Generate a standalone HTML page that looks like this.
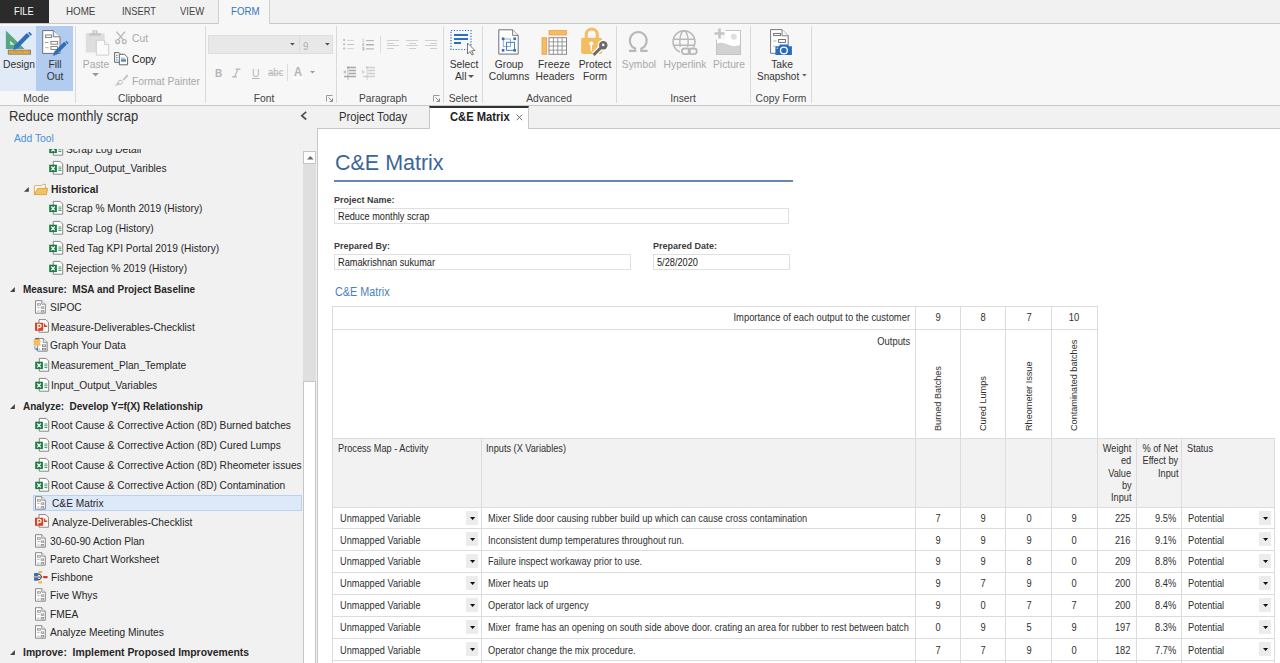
<!DOCTYPE html>
<html><head><meta charset="utf-8"><title>C&amp;E Matrix</title>
<style>
html,body{margin:0;padding:0;}
body{width:1280px;height:663px;overflow:hidden;position:relative;background:#f1f1f1;font-family:"Liberation Sans", sans-serif;}
.t{position:absolute;white-space:nowrap;}
.b{position:absolute;box-sizing:border-box;}
svg.b{overflow:visible;}
</style></head><body>

<div class="b" style="left:0px;top:0px;width:1280px;height:23px;background:#f1f1f1;"></div>
<div class="b" style="left:0px;top:0px;width:49px;height:23px;background:#2b2b2b;"></div>
<div class="t" style="left:14px;transform-origin:0 0;top:5px;font-size:10.220px;line-height:13px;color:#fff;transform:scaleX(0.91);">FILE</div>
<div class="t" style="left:66px;transform-origin:0 0;top:4px;font-size:10.769px;line-height:14px;color:#444;transform:scaleX(0.91);">HOME</div>
<div class="t" style="left:122px;transform-origin:0 0;top:5px;font-size:10.220px;line-height:13px;color:#444;transform:scaleX(0.91);">INSERT</div>
<div class="t" style="left:180px;transform-origin:0 0;top:5px;font-size:10.440px;line-height:14px;color:#444;transform:scaleX(0.91);">VIEW</div>
<div class="b" style="left:0px;top:23px;width:1280px;height:83px;background:#f7f7f7;border-top:1px solid #c8c8c8;border-bottom:1px solid #c8c8c8;"></div>
<div class="b" style="left:218px;top:0px;width:52px;height:24px;background:#f7f7f7;border-left:1px solid #cfcfcf;border-right:1px solid #cfcfcf;"></div>
<div class="t" style="left:230.6px;transform-origin:0 0;top:4px;font-size:10.659px;line-height:14px;color:#3a74bd;transform:scaleX(0.91);">FORM</div>
<div class="b" style="left:0px;top:26px;width:36px;height:65px;background:#e1eaf7;"></div>
<div class="b" style="left:36px;top:26px;width:37px;height:65px;background:#b2ccef;"></div>
<div class="b" style="left:75px;top:26px;width:1px;height:77px;background:#dadada;"></div>
<div class="b" style="left:205px;top:26px;width:1px;height:77px;background:#dadada;"></div>
<div class="b" style="left:336px;top:26px;width:1px;height:77px;background:#dadada;"></div>
<div class="b" style="left:443px;top:26px;width:1px;height:77px;background:#dadada;"></div>
<div class="b" style="left:482px;top:26px;width:1px;height:77px;background:#dadada;"></div>
<div class="b" style="left:616px;top:26px;width:1px;height:77px;background:#dadada;"></div>
<div class="b" style="left:750px;top:26px;width:1px;height:77px;background:#dadada;"></div>
<div class="b" style="left:811px;top:26px;width:1px;height:77px;background:#dadada;"></div>
<svg class="b" style="left:0px;top:24px" width="75" height="36" viewBox="0 24 75 36">
<path d="M5.9 30.4 L5.9 48.9 L24.6 48.9 Z" fill="#55a77f"/>
<path d="M10.2 40.7 L10.2 44.8 L14.4 44.8 Z" fill="#e1eaf7"/>
<rect x="8.2" y="50.1" width="22.5" height="4.1" fill="#e8ab3e" stroke="#6a6a6a" stroke-width="0.7"/>
<path d="M9.5 52h1.5 M13 52h1 M15 52h2.5 M19.5 52h1 M21.5 52h2.5 M26 52h1 M28 52h2" stroke="#c98a20" stroke-width="1.2"/>
<path d="M15.5 47.5 L28.4 34.6" stroke="#2f6fba" stroke-width="4.3"/>
<path d="M28.1 33.1 L29.4 31.8 L32 34.4 L30.7 35.7 Z" fill="#2f6fba"/>
<path d="M13.3 50 L14.3 46.2 L16.9 48.8 Z" fill="#2f6fba"/>
</svg>
<svg class="b" style="left:0px;top:24px" width="75" height="36" viewBox="0 24 75 36">
<path d="M42.7 30.6 H53.3 L60 37.3 V53.4 H42.7 Z" fill="#fff" stroke="#6e6e6e" stroke-width="1"/>
<path d="M53.3 30.6 V36.8 H60" fill="#f0f0f0" stroke="#6e6e6e" stroke-width="0.9"/>
<rect x="45.6" y="35" width="6" height="2.6" fill="none" stroke="#777" stroke-width="0.9"/>
<path d="M45.1 42.5h3.4" stroke="#8a8a8a" stroke-width="0.9"/>
<rect x="50.9" y="41.4" width="6.8" height="2.8" fill="none" stroke="#777" stroke-width="0.9"/>
<path d="M45.1 47.7h3.4" stroke="#aaa" stroke-width="0.9"/>
<rect x="50.9" y="46.6" width="6.8" height="2.8" fill="none" stroke="#777" stroke-width="0.9"/>
<path d="M55 53.6 L65.5 43.2" stroke="#2f6fba" stroke-width="3.8"/>
<path d="M65.3 41.9 L66.4 40.8 L68.6 43 L67.5 44.1 Z" fill="#2f6fba"/>
<path d="M53 55.8 L53.9 52.6 L56.2 54.9 Z" fill="#2f6fba"/>
</svg>
<div class="t" style="left:3px;transform-origin:0 0;top:57px;font-size:11.319px;line-height:15px;color:#333;transform:scaleX(0.91);">Design</div>
<div class="t" style="left:-245.5px;width:600px;text-align:center;transform-origin:50% 0;top:57px;font-size:11.319px;line-height:15px;color:#333;transform:scaleX(0.91);">Fill</div>
<div class="t" style="left:-245.5px;width:600px;text-align:center;transform-origin:50% 0;top:69px;font-size:11.319px;line-height:15px;color:#333;transform:scaleX(0.91);">Out</div>
<div class="t" style="left:-264px;width:600px;text-align:center;transform-origin:50% 0;top:91px;font-size:11.319px;line-height:15px;color:#444;transform:scaleX(0.91);">Mode</div>
<svg class="b" style="left:0px;top:24px" width="220" height="70" viewBox="0 24 220 70">
<rect x="85.8" y="33.2" width="18.8" height="19.3" fill="#dedede"/>
<rect x="89.2" y="33.2" width="11.6" height="2.6" fill="#c6c6c6"/>
<rect x="92.5" y="30.3" width="5" height="3.5" fill="#c6c6c6"/>
<rect x="94" y="31.3" width="2" height="1.6" fill="#e8e8e8"/>
<path d="M96.3 40.3 H104.5 L108.7 44.5 V55.1 H96.3 Z" fill="#fafafa" stroke="#cbcbcb" stroke-width="0.9"/>
<path d="M104.5 40.3 V44.5 H108.7" fill="#eee" stroke="#cbcbcb" stroke-width="0.8"/>
</svg>
<div class="t" style="left:-204.5px;width:600px;text-align:center;transform-origin:50% 0;top:57px;font-size:11.319px;line-height:15px;color:#a8a8a8;transform:scaleX(0.91);">Paste</div>
<svg class="b" style="left:92px;top:73px" width="7" height="4" viewBox="0 0 7 4"><path d="M0 0 H7 L3.5 3.5 Z" fill="#9a9a9a"/></svg>
<svg class="b" style="left:0px;top:24px" width="220" height="70" viewBox="0 24 220 70">
<path d="M116.4 31.6 L123.2 39.6 M125 31.6 L118.2 39.6" stroke="#b8b8b8" stroke-width="1.4"/>
<circle cx="117.7" cy="41.6" r="1.9" fill="none" stroke="#b8b8b8" stroke-width="1.3"/>
<circle cx="124.3" cy="41.6" r="1.9" fill="none" stroke="#b8b8b8" stroke-width="1.3"/>
</svg>
<div class="t" style="left:131.5px;transform-origin:0 0;top:31px;font-size:11.319px;line-height:15px;color:#a8a8a8;transform:scaleX(0.91);">Cut</div>
<svg class="b" style="left:0px;top:24px" width="220" height="70" viewBox="0 24 220 70">
<path d="M114.6 52.6 H119 L120.3 54 V62.3 H114.6 Z" fill="#fff" stroke="#555" stroke-width="0.9"/>
<path d="M116 55.3h1.6 M116 57.6h1.6 M116 60h1.6" stroke="#2f6fba" stroke-width="0.9"/>
<path d="M119.3 54.3 H124.5 L127.6 57.4 V64.8 H119.3 Z" fill="#fff" stroke="#555" stroke-width="0.9"/>
<rect x="121" y="59.3" width="5" height="2.4" fill="#4a86c8"/>
<path d="M121 58.2h4" stroke="#4a86c8" stroke-width="0.7"/>
</svg>
<div class="t" style="left:131.5px;transform-origin:0 0;top:52px;font-size:11.319px;line-height:15px;color:#222;transform:scaleX(0.91);">Copy</div>
<svg class="b" style="left:0px;top:24px" width="220" height="70" viewBox="0 24 220 70">
<path d="M127.4 74.3 Q128.6 75.8 127.6 77 L124.2 80.6 L122.6 79.2 L126 75.6 Q126.6 74.8 127.4 74.3 Z" fill="#c6c6c6"/>
<circle cx="120.5" cy="82.3" r="1.9" fill="#f7f7f7" stroke="#c4c4c4" stroke-width="1.1"/>
<path d="M119 81 Q116.3 83 114.6 85.9 Q117.8 85.7 121.8 83.8 Z" fill="#c8c8c8"/>
<circle cx="120.5" cy="82.3" r="1.3" fill="#f7f7f7"/>
</svg>
<div class="t" style="left:131.5px;transform-origin:0 0;top:74px;font-size:11.319px;line-height:15px;color:#a8a8a8;transform:scaleX(0.91);">Format Painter</div>
<div class="t" style="left:-160px;width:600px;text-align:center;transform-origin:50% 0;top:91px;font-size:11.319px;line-height:15px;color:#444;transform:scaleX(0.91);">Clipboard</div>
<div class="b" style="left:208px;top:35px;width:125px;height:19px;background:#e8e8e8;border:1px solid #dedede;"></div>
<div class="b" style="left:298.5px;top:36px;width:1.5px;height:17px;background:#dcdcdc;"></div>
<svg class="b" style="left:290px;top:43px" width="5" height="3" viewBox="0 0 5 3"><path d="M0 0 H4.8 L2.4 2.6 Z" fill="#505050"/></svg>
<svg class="b" style="left:324.5px;top:43px" width="5" height="3" viewBox="0 0 5 3"><path d="M0 0 H4.8 L2.4 2.6 Z" fill="#505050"/></svg>
<div class="t" style="left:303px;transform-origin:0 0;top:39px;font-size:10.989px;line-height:14px;color:#b0b0b0;transform:scaleX(0.91);">9</div>
<div class="t" style="left:214.5px;transform-origin:0 0;top:65px;font-size:11.765px;line-height:15px;color:#b5b5b5;transform:scaleX(0.85);"><b>B</b></div>
<svg class="b" style="left:0px;top:24px" width="320" height="70" viewBox="0 24 320 70"><path d="M235.5 69.2 H240.5 M232 76.8 H237 M238 69.2 L234.5 76.8" stroke="#b8b8b8" stroke-width="1.2" fill="none"/></svg>
<div class="t" style="left:252px;transform-origin:0 0;top:66px;font-size:11.538px;line-height:15px;color:#b8b8b8;transform:scaleX(0.91);"><u>U</u></div>
<div class="t" style="left:268px;transform-origin:0 0;top:65px;font-size:11.294px;line-height:15px;color:#b5b5b5;transform:scaleX(0.85);">abc</div>
<div class="b" style="left:268px;top:73px;width:14px;height:1px;background:#c4c4c4;"></div>
<div class="b" style="left:287px;top:64px;width:1px;height:17px;background:#dcdcdc;"></div>
<div class="t" style="left:294px;transform-origin:0 0;top:64px;font-size:12.222px;line-height:16px;color:#b5b5b5;transform:scaleX(0.9);"><b>A</b></div>
<div class="b" style="left:293px;top:77px;width:10px;height:2px;background:#fff;"></div>
<svg class="b" style="left:310px;top:71px" width="5" height="3" viewBox="0 0 5 3"><path d="M0 0 H5 L2.5 2.5 Z" fill="#9a9a9a"/></svg>
<div class="t" style="left:-36.5px;width:600px;text-align:center;transform-origin:50% 0;top:91px;font-size:11.319px;line-height:15px;color:#444;transform:scaleX(0.91);">Font</div>
<svg class="b" style="left:326px;top:95px" width="7" height="7" viewBox="0 0 7 7"><path d="M0.5 6.5 V0.5 H6.5" fill="none" stroke="#999" stroke-width="1"/><path d="M2.5 2.5 L6 6 M3.5 6.5 H6.5 V3.5" fill="none" stroke="#888" stroke-width="1"/></svg>
<svg class="b" style="left:0px;top:24px" width="800" height="40" viewBox="0 24 800 40">
<circle cx="344.1" cy="40.1" r="1.1" fill="#bdbdbd"/>
<circle cx="344.1" cy="44.3" r="1.1" fill="#bdbdbd"/>
<circle cx="344.1" cy="48.5" r="1.1" fill="#bdbdbd"/>
<path d="M347.2 40.4 H353.9" stroke="#d2d2d2" stroke-width="1"/>
<path d="M347.2 44.5 H353.9" stroke="#c2c2c2" stroke-width="1"/>
<path d="M347.2 48.6 H353.9" stroke="#d2d2d2" stroke-width="1"/>
<path d="M362.3 39.3 H363.5 V41.6 M362.2 41.6 H364.3" fill="none" stroke="#c8c8c8" stroke-width="0.8"/>
<path d="M362.2 43.3 H364 V44.6 H362.4 V45.9 H364.3" fill="none" stroke="#bdbdbd" stroke-width="0.8"/>
<path d="M362.2 47.6 H364 V50 H362.2 M362.6 48.8 H364" fill="none" stroke="#b0b0b0" stroke-width="0.8"/>
<path d="M366 40.6 H373.9" stroke="#b5b5b5" stroke-width="1.1"/>
<path d="M366 44.8 H373.9" stroke="#999" stroke-width="1.1"/>
<path d="M366 48.9 H373.9" stroke="#b0b0b0" stroke-width="1.1"/>
</svg>
<div class="b" style="left:380px;top:36px;width:1px;height:17px;background:#dcdcdc;"></div>
<div class="b" style="left:387px;top:40px;width:12px;height:1.3px;background:#cfcfcf;"></div>
<div class="b" style="left:387px;top:42.5px;width:7px;height:1.3px;background:#cfcfcf;"></div>
<div class="b" style="left:387px;top:45px;width:12px;height:1.3px;background:#cfcfcf;"></div>
<div class="b" style="left:387px;top:47.5px;width:7px;height:1.3px;background:#cfcfcf;"></div>
<div class="b" style="left:406.0px;top:40px;width:12px;height:1.3px;background:#cfcfcf;"></div>
<div class="b" style="left:408.5px;top:42.5px;width:7px;height:1.3px;background:#cfcfcf;"></div>
<div class="b" style="left:406.0px;top:45px;width:12px;height:1.3px;background:#cfcfcf;"></div>
<div class="b" style="left:408.5px;top:47.5px;width:7px;height:1.3px;background:#cfcfcf;"></div>
<div class="b" style="left:425px;top:40px;width:12px;height:1.3px;background:#cfcfcf;"></div>
<div class="b" style="left:430px;top:42.5px;width:7px;height:1.3px;background:#cfcfcf;"></div>
<div class="b" style="left:425px;top:45px;width:12px;height:1.3px;background:#cfcfcf;"></div>
<div class="b" style="left:430px;top:47.5px;width:7px;height:1.3px;background:#cfcfcf;"></div>
<svg class="b" style="left:343px;top:66px" width="14" height="14" viewBox="0 0 14 14">
<path d="M4 1.5h9 M6 4.5h7 M6 7.5h7 M1 10.5h12" stroke="#a8a8a8" stroke-width="1.5"/>
<path d="M0 6 L3 4 V8 Z" fill="#c0c0c0"/>
<path d="M5 0 V14" stroke="#999" stroke-width="0.6"/>
</svg>
<svg class="b" style="left:362px;top:66px" width="14" height="14" viewBox="0 0 14 14">
<path d="M4 1.5h9 M6 4.5h7 M6 7.5h7 M1 10.5h12" stroke="#d0d0d0" stroke-width="1.5"/>
<path d="M3 6 L0 4 V8 Z" fill="#d0d0d0"/>
<path d="M5 0 V14" stroke="#bbb" stroke-width="0.6"/>
</svg>
<div class="t" style="left:82.5px;width:600px;text-align:center;transform-origin:50% 0;top:91px;font-size:11.319px;line-height:15px;color:#444;transform:scaleX(0.91);">Paragraph</div>
<svg class="b" style="left:433px;top:95px" width="7" height="7" viewBox="0 0 7 7"><path d="M0.5 6.5 V0.5 H6.5" fill="none" stroke="#999" stroke-width="1"/><path d="M2.5 2.5 L6 6 M3.5 6.5 H6.5 V3.5" fill="none" stroke="#888" stroke-width="1"/></svg>
<svg class="b" style="left:450px;top:29px" width="27" height="27" viewBox="0 0 27 27">
<rect x="1" y="1.5" width="20" height="19" fill="none" stroke="#2c6fbf" stroke-width="1.2" stroke-dasharray="1.2 1.6"/>
<rect x="4" y="5" width="14" height="2" fill="#2c6fbf"/>
<rect x="4" y="9" width="14" height="2" fill="#2c6fbf"/>
<rect x="4" y="13" width="7" height="2" fill="#2c6fbf"/>
<path d="M17.5 14 V25 L20 22.5 L22 26 L23.5 25.2 L21.5 21.8 L25 21.5 Z" fill="#fff" stroke="#666" stroke-width="0.9"/>
</svg>
<div class="t" style="left:163.5px;width:600px;text-align:center;transform-origin:50% 0;top:57px;font-size:11.319px;line-height:15px;color:#333;transform:scaleX(0.91);">Select</div>
<div class="t" style="left:454.5px;transform-origin:0 0;top:69px;font-size:11.319px;line-height:15px;color:#333;transform:scaleX(0.91);">All</div>
<svg class="b" style="left:468px;top:75px" width="6" height="3" viewBox="0 0 6 3"><path d="M0 0 H6 L3 3 Z" fill="#555"/></svg>
<div class="t" style="left:163px;width:600px;text-align:center;transform-origin:50% 0;top:91px;font-size:11.319px;line-height:15px;color:#444;transform:scaleX(0.91);">Select</div>
<svg class="b" style="left:0px;top:24px" width="800" height="40" viewBox="0 24 800 40">
<path d="M498.8 29.8 H512.6 L518.2 35.4 V54.1 H498.8 Z" fill="#fff" stroke="#707070" stroke-width="1"/>
<path d="M512.6 29.8 V35.4 H518.2" fill="#f4f4f4" stroke="#707070" stroke-width="0.9"/>
<rect x="503.3" y="39" width="7.2" height="7.6" fill="none" stroke="#7ea6d8" stroke-width="0.9"/>
<rect x="506.6" y="42.3" width="8" height="8" fill="none" stroke="#2f6fba" stroke-width="0.9"/>
<rect x="501.8" y="37.5" width="2.6" height="2.6" fill="#2f6fba"/>
<rect x="513.4" y="37.5" width="2.6" height="2.6" fill="#2f6fba"/>
<rect x="501.8" y="49" width="2.6" height="2.6" fill="#2f6fba"/>
<rect x="513.4" y="49" width="2.6" height="2.6" fill="#2f6fba"/>
</svg>
<div class="t" style="left:208.5px;width:600px;text-align:center;transform-origin:50% 0;top:57px;font-size:11.319px;line-height:15px;color:#333;transform:scaleX(0.91);">Group</div>
<div class="t" style="left:209px;width:600px;text-align:center;transform-origin:50% 0;top:69px;font-size:11.319px;line-height:15px;color:#333;transform:scaleX(0.91);">Columns</div>
<svg class="b" style="left:541px;top:29px" width="27" height="27" viewBox="0 0 27 27">
<rect x="8" y="1.5" width="17.5" height="4.5" fill="#f5bd62" stroke="#ee9f4a" stroke-width="0.8"/>
<rect x="1" y="8.7" width="4.6" height="16.6" fill="#f5bd62" stroke="#ee9f4a" stroke-width="0.8"/>
<rect x="8" y="8.7" width="17.5" height="16.6" fill="#fff" stroke="#8a8a8a" stroke-width="1"/>
<path d="M12.4 8.7v16.6 M16.75 8.7v16.6 M21.1 8.7v16.6 M8 12.85h17.5 M8 17h17.5 M8 21.15h17.5" stroke="#8f8f8f" stroke-width="0.9"/>
</svg>
<div class="t" style="left:254px;width:600px;text-align:center;transform-origin:50% 0;top:57px;font-size:11.319px;line-height:15px;color:#333;transform:scaleX(0.91);">Freeze</div>
<div class="t" style="left:254.5px;width:600px;text-align:center;transform-origin:50% 0;top:69px;font-size:11.319px;line-height:15px;color:#333;transform:scaleX(0.91);">Headers</div>
<svg class="b" style="left:0px;top:24px" width="800" height="40" viewBox="0 24 800 40">
<path d="M586.3 38.5 V34.5 A5.5 5.5 0 0 1 597.3 34.5 V38.5" fill="none" stroke="#f5bd62" stroke-width="3"/>
<rect x="581.1" y="37.8" width="21.1" height="16.2" rx="2" fill="#f5bd62"/>
<circle cx="591.3" cy="43.6" r="2.1" fill="#fff"/>
<rect x="590.6" y="44" width="1.4" height="7.2" fill="#fff"/>
<path d="M594 54.6 L600.8 47.8" stroke="#f7f7f7" stroke-width="5.6"/>
<circle cx="603.3" cy="45.2" r="5.6" fill="#f7f7f7"/>
<path d="M593.6 55 L600.8 47.8" stroke="#6a6a6a" stroke-width="3"/>
<circle cx="603.3" cy="45.2" r="4.2" fill="#6a6a6a"/>
<circle cx="603.2" cy="44.9" r="1.3" fill="#f7f7f7"/>
</svg>
<div class="t" style="left:294.5px;width:600px;text-align:center;transform-origin:50% 0;top:57px;font-size:11.319px;line-height:15px;color:#333;transform:scaleX(0.91);">Protect</div>
<div class="t" style="left:294.5px;width:600px;text-align:center;transform-origin:50% 0;top:69px;font-size:11.319px;line-height:15px;color:#333;transform:scaleX(0.91);">Form</div>
<div class="t" style="left:248.5px;width:600px;text-align:center;transform-origin:50% 0;top:91px;font-size:11.319px;line-height:15px;color:#444;transform:scaleX(0.91);">Advanced</div>
<svg class="b" style="left:0px;top:24px" width="800" height="40" viewBox="0 24 800 40">
<path d="M629 50.9 H635.2 V48.6 A8.4 8.6 0 1 1 641.3 48.6 V50.9 H647.6" fill="none" stroke="#b8b8b8" stroke-width="2.1" stroke-linejoin="miter"/>
<circle cx="684" cy="41.7" r="11" fill="none" stroke="#b8b8b8" stroke-width="1.5"/>
<ellipse cx="684" cy="41.7" rx="4.2" ry="11" fill="none" stroke="#b8b8b8" stroke-width="1.4"/>
<path d="M673 39.2 H695 M673 45.3 H695" stroke="#b8b8b8" stroke-width="1.4"/>
<rect x="680" y="47" width="19" height="9.5" fill="#f7f7f7"/>
<rect x="681.8" y="48.5" width="8.2" height="5.6" rx="2.8" fill="none" stroke="#b8b8b8" stroke-width="1.8"/>
<rect x="688.6" y="48.5" width="8.2" height="5.6" rx="2.8" fill="none" stroke="#b8b8b8" stroke-width="1.8"/>
<rect x="716.5" y="30.5" width="24" height="24" fill="#fff" stroke="#c4c4c4" stroke-width="1"/>
<path d="M717 54 V43.5 Q722 41.5 728 44.5 T740 45 V54 Z" fill="#d2d2d2"/>
<circle cx="733.8" cy="36.7" r="3" fill="#dedede"/>
<rect x="713.5" y="28" width="12" height="11.5" fill="#f7f7f7"/>
<path d="M719.5 28.5 V38.5 M714.5 33.5 H724.5" stroke="#c4c4c4" stroke-width="2.6"/>
</svg>
<div class="t" style="left:339px;width:600px;text-align:center;transform-origin:50% 0;top:57px;font-size:11.319px;line-height:15px;color:#a8a8a8;transform:scaleX(0.91);">Symbol</div>
<div class="t" style="left:384.5px;width:600px;text-align:center;transform-origin:50% 0;top:57px;font-size:11.319px;line-height:15px;color:#a8a8a8;transform:scaleX(0.91);">Hyperlink</div>
<div class="t" style="left:429px;width:600px;text-align:center;transform-origin:50% 0;top:57px;font-size:11.319px;line-height:15px;color:#a8a8a8;transform:scaleX(0.91);">Picture</div>
<div class="t" style="left:383px;width:600px;text-align:center;transform-origin:50% 0;top:91px;font-size:11.319px;line-height:15px;color:#444;transform:scaleX(0.91);">Insert</div>
<svg class="b" style="left:0px;top:24px" width="800" height="40" viewBox="0 24 800 40">
<path d="M770.6 29.6 H782 L788.2 35.8 V53.3 H770.6 Z" fill="#fff" stroke="#777" stroke-width="1"/>
<path d="M782 29.6 V35.8 H788.2" fill="#f4f4f4" stroke="#777" stroke-width="0.9"/>
<rect x="773.7" y="33.4" width="6.8" height="2.2" fill="none" stroke="#666" stroke-width="0.9"/>
<path d="M773.3 41h3.3" stroke="#aaa" stroke-width="0.9"/>
<rect x="778.6" y="39.5" width="6.8" height="2.9" fill="none" stroke="#666" stroke-width="0.9"/>
<path d="M773.3 46.3h2" stroke="#aaa" stroke-width="0.9"/>
<path d="M775.4 46.3 H779 L779.8 44.6 H787.7 L788.5 46.3 H791.9 V55 H775.4 Z" fill="#2a6bbd"/>
<circle cx="783.9" cy="50.5" r="3.4" fill="none" stroke="#fff" stroke-width="1.3"/>
<circle cx="777.2" cy="48.2" r="0.6" fill="#fff"/>
</svg>
<div class="t" style="left:481.5px;width:600px;text-align:center;transform-origin:50% 0;top:57px;font-size:11.319px;line-height:15px;color:#333;transform:scaleX(0.91);">Take</div>
<div class="t" style="left:756.5px;transform-origin:0 0;top:69px;font-size:10.989px;line-height:14px;color:#333;transform:scaleX(0.91);">Snapshot</div>
<svg class="b" style="left:801.5px;top:74.2px" width="5" height="3" viewBox="0 0 5 3"><path d="M0 0 H4.8 L2.4 2.6 Z" fill="#666"/></svg>
<div class="t" style="left:480.5px;width:600px;text-align:center;transform-origin:50% 0;top:91px;font-size:11.319px;line-height:15px;color:#444;transform:scaleX(0.91);">Copy Form</div>
<div class="t" style="left:9px;transform-origin:0 0;top:107px;font-size:14.286px;line-height:19px;color:#333;transform:scaleX(0.91);">Reduce monthly scrap</div>
<svg class="b" style="left:300px;top:111px" width="8" height="10" viewBox="0 0 8 10"><path d="M6.2 0.9 L1.8 4.7 L6.2 8.5" fill="none" stroke="#505050" stroke-width="1.7"/></svg>
<div class="t" style="left:13.5px;transform-origin:0 0;top:131px;font-size:11.319px;line-height:15px;color:#4a8fdd;transform:scaleX(0.91);">Add Tool</div>
<div class="b" style="left:0;top:149px;width:302px;height:514px;overflow:hidden;">
<div class="b" style="left:0;top:-149px;width:1280px;height:663px;">
<div class="b" style="left:33px;top:495px;width:269px;height:16px;background:#dde9f9;border:1px solid #b9d1f3;"></div>
<svg class="b" style="left:0px;top:0px" width="320" height="663" viewBox="0 0 320 663">
<path d="M53.3 142.4 H60.1 L62.7 145 V155.2 H53.3 Z" fill="#fff" stroke="#7a7a7a" stroke-width="0.9"/>
<path d="M58.4 148h3 M58.4 149.8h3 M58.4 151.6h3" stroke="#2a8a53" stroke-width="0.9"/>
<rect x="49.2" y="145.7" width="7.7" height="7.4" fill="#1f7a45"/>
<path d="M51.3 147.5 L54.8 151.4 M54.8 147.5 L51.3 151.4" stroke="#fff" stroke-width="1.2"/>
</svg>
<div class="t" style="left:66.1px;transform-origin:0 0;top:142px;font-size:11.209px;line-height:15px;color:#262626;transform:scaleX(0.91);">Scrap Log Detail</div>
<svg class="b" style="left:0px;top:0px" width="320" height="663" viewBox="0 0 320 663">
<path d="M53.3 161.4 H60.1 L62.7 164 V174.2 H53.3 Z" fill="#fff" stroke="#7a7a7a" stroke-width="0.9"/>
<path d="M58.4 167h3 M58.4 168.8h3 M58.4 170.6h3" stroke="#2a8a53" stroke-width="0.9"/>
<rect x="49.2" y="164.7" width="7.7" height="7.4" fill="#1f7a45"/>
<path d="M51.3 166.5 L54.8 170.4 M54.8 166.5 L51.3 170.4" stroke="#fff" stroke-width="1.2"/>
</svg>
<div class="t" style="left:66.1px;transform-origin:0 0;top:161px;font-size:11.209px;line-height:15px;color:#262626;transform:scaleX(0.91);">Input_Output_Varibles</div>
<svg class="b" style="left:0px;top:0px" width="320" height="663" viewBox="0 0 320 663"><path d="M28.8 186.9 V191.8 H23.9 Z" fill="#444"/><path d="M34.4 194.4 V186.2 Q34.4 185.6 35.2 185.6 H41.6 L43 184.4 H45.4 V188.6" fill="#fff" stroke="#d8a548" stroke-width="0.9"/><path d="M37.6 188.4 H47.6 L46.4 194.6 H34.2 Z" fill="#f5c162" stroke="#d9a03e" stroke-width="0.9" stroke-linejoin="round"/></svg>
<div class="t" style="left:50.8px;transform-origin:0 0;top:182px;font-size:11.429px;line-height:15px;color:#262626;font-weight:bold;transform:scaleX(0.91);">Historical</div>
<svg class="b" style="left:0px;top:0px" width="320" height="663" viewBox="0 0 320 663">
<path d="M53.3 201.4 H60.1 L62.7 204 V214.2 H53.3 Z" fill="#fff" stroke="#7a7a7a" stroke-width="0.9"/>
<path d="M58.4 207h3 M58.4 208.8h3 M58.4 210.6h3" stroke="#2a8a53" stroke-width="0.9"/>
<rect x="49.2" y="204.7" width="7.7" height="7.4" fill="#1f7a45"/>
<path d="M51.3 206.5 L54.8 210.4 M54.8 206.5 L51.3 210.4" stroke="#fff" stroke-width="1.2"/>
</svg>
<div class="t" style="left:66.1px;transform-origin:0 0;top:201px;font-size:11.209px;line-height:15px;color:#262626;transform:scaleX(0.91);">Scrap % Month 2019 (History)</div>
<svg class="b" style="left:0px;top:0px" width="320" height="663" viewBox="0 0 320 663">
<path d="M53.3 221.4 H60.1 L62.7 224 V234.2 H53.3 Z" fill="#fff" stroke="#7a7a7a" stroke-width="0.9"/>
<path d="M58.4 227h3 M58.4 228.8h3 M58.4 230.6h3" stroke="#2a8a53" stroke-width="0.9"/>
<rect x="49.2" y="224.7" width="7.7" height="7.4" fill="#1f7a45"/>
<path d="M51.3 226.5 L54.8 230.4 M54.8 226.5 L51.3 230.4" stroke="#fff" stroke-width="1.2"/>
</svg>
<div class="t" style="left:66.1px;transform-origin:0 0;top:221px;font-size:11.209px;line-height:15px;color:#262626;transform:scaleX(0.91);">Scrap Log (History)</div>
<svg class="b" style="left:0px;top:0px" width="320" height="663" viewBox="0 0 320 663">
<path d="M53.3 241.4 H60.1 L62.7 244 V254.2 H53.3 Z" fill="#fff" stroke="#7a7a7a" stroke-width="0.9"/>
<path d="M58.4 247h3 M58.4 248.8h3 M58.4 250.6h3" stroke="#2a8a53" stroke-width="0.9"/>
<rect x="49.2" y="244.7" width="7.7" height="7.4" fill="#1f7a45"/>
<path d="M51.3 246.5 L54.8 250.4 M54.8 246.5 L51.3 250.4" stroke="#fff" stroke-width="1.2"/>
</svg>
<div class="t" style="left:66.1px;transform-origin:0 0;top:241px;font-size:11.209px;line-height:15px;color:#262626;transform:scaleX(0.91);">Red Tag KPI Portal 2019 (History)</div>
<svg class="b" style="left:0px;top:0px" width="320" height="663" viewBox="0 0 320 663">
<path d="M53.3 261.4 H60.1 L62.7 264 V274.2 H53.3 Z" fill="#fff" stroke="#7a7a7a" stroke-width="0.9"/>
<path d="M58.4 267h3 M58.4 268.8h3 M58.4 270.6h3" stroke="#2a8a53" stroke-width="0.9"/>
<rect x="49.2" y="264.7" width="7.7" height="7.4" fill="#1f7a45"/>
<path d="M51.3 266.5 L54.8 270.4 M54.8 266.5 L51.3 270.4" stroke="#fff" stroke-width="1.2"/>
</svg>
<div class="t" style="left:66.1px;transform-origin:0 0;top:261px;font-size:11.209px;line-height:15px;color:#262626;transform:scaleX(0.91);">Rejection % 2019 (History)</div>
<svg class="b" style="left:0px;top:0px" width="320" height="663" viewBox="0 0 320 663"><path d="M14.9 287.1 V291.9 H10.1 Z" fill="#444"/></svg>
<div class="t" style="left:23.3px;transform-origin:0 0;top:282px;font-size:10.989px;line-height:14px;color:#262626;font-weight:bold;transform:scaleX(0.91);">Measure:&nbsp; MSA and Project Baseline</div>
<svg class="b" style="left:0px;top:0px" width="320" height="663" viewBox="0 0 320 663">
<path d="M35.5 300.7 H41.8 L45.3 304.2 V313.2 H35.5 Z" fill="#fff" stroke="#7a7a7a" stroke-width="0.9"/>
<path d="M41.8 300.7 V304.2 H45.3" fill="#f2f2f2" stroke="#7a7a7a" stroke-width="0.8"/>
<rect x="37.5" y="303.7" width="3" height="1.5" fill="none" stroke="#8a8a8a" stroke-width="0.8"/>
<path d="M37.3 307.4h2.2 M37.3 311.1h2.2" stroke="#999" stroke-width="0.8"/>
<rect x="41.2" y="306.9" width="2.5" height="1.4" fill="none" stroke="#8a8a8a" stroke-width="0.8"/>
<rect x="41.2" y="310.6" width="2.5" height="1.4" fill="none" stroke="#8a8a8a" stroke-width="0.8"/>
</svg>
<div class="t" style="left:49.8px;transform-origin:0 0;top:300px;font-size:11.209px;line-height:15px;color:#262626;transform:scaleX(0.91);">SIPOC</div>
<svg class="b" style="left:0px;top:0px" width="320" height="663" viewBox="0 0 320 663">
<path d="M39 319.6 H45.8 L48.4 322.2 V332.2 H39 Z" fill="#fff" stroke="#7a7a7a" stroke-width="0.9"/>
<path d="M44.6 323.4 V326.2 H47.2" fill="none" stroke="#d24726" stroke-width="1.4"/>
<rect x="35" y="322.7" width="8.2" height="8.1" fill="#d24726"/>
<path d="M37.8 329.4 V324.4 H39.6 A1.5 1.5 0 0 1 39.6 327.4 H37.8" fill="none" stroke="#fff" stroke-width="1.2"/>
</svg>
<div class="t" style="left:51.3px;transform-origin:0 0;top:320px;font-size:11.209px;line-height:15px;color:#262626;transform:scaleX(0.91);">Measure-Deliverables-Checklist</div>
<svg class="b" style="left:0px;top:0px" width="320" height="663" viewBox="0 0 320 663">
<path d="M37.7 338.5 H43.3 L47.2 342.4 V351.2 H37.7 Z" fill="#fff" stroke="#7a7a7a" stroke-width="0.9"/>
<path d="M43.3 338.5 V342.4 H47.2" fill="#f2f2f2" stroke="#7a7a7a" stroke-width="0.8"/>
<rect x="42.4" y="344.9" width="3.4" height="1.6" fill="none" stroke="#7a7a7a" stroke-width="0.8"/>
<rect x="42.4" y="348.3" width="3.4" height="1.6" fill="none" stroke="#7a7a7a" stroke-width="0.8"/>
<path d="M39 349.2h1.3 M40.5 341.4h0.8 M40.5 344.8h0.8" stroke="#888" stroke-width="0.8"/>
<rect x="33.6" y="338.9" width="6.5" height="6.8" fill="#f5bd5e"/>
<rect x="35.1" y="337.9" width="3.9" height="1.4" fill="#6a6a6a"/>
<path d="M34.8 346.3 V348.2 Q34.8 349.2 36 349.2 H37" fill="none" stroke="#7aa6dc" stroke-width="1.2"/>
<path d="M36.4 347.8 L38.2 349.4 L36.4 350.6 Z" fill="#2f6fba"/>
</svg>
<div class="t" style="left:49.8px;transform-origin:0 0;top:338px;font-size:11.209px;line-height:15px;color:#262626;transform:scaleX(0.91);">Graph Your Data</div>
<svg class="b" style="left:0px;top:0px" width="320" height="663" viewBox="0 0 320 663">
<path d="M39.3 358.4 H46.1 L48.7 361 V371.2 H39.3 Z" fill="#fff" stroke="#7a7a7a" stroke-width="0.9"/>
<path d="M44.4 364h3 M44.4 365.8h3 M44.4 367.6h3" stroke="#2a8a53" stroke-width="0.9"/>
<rect x="35.2" y="361.7" width="7.7" height="7.4" fill="#1f7a45"/>
<path d="M37.3 363.5 L40.8 367.4 M40.8 363.5 L37.3 367.4" stroke="#fff" stroke-width="1.2"/>
</svg>
<div class="t" style="left:51.3px;transform-origin:0 0;top:358px;font-size:11.209px;line-height:15px;color:#262626;transform:scaleX(0.91);">Measurement_Plan_Template</div>
<svg class="b" style="left:0px;top:0px" width="320" height="663" viewBox="0 0 320 663">
<path d="M39.3 378.4 H46.1 L48.7 381 V391.2 H39.3 Z" fill="#fff" stroke="#7a7a7a" stroke-width="0.9"/>
<path d="M44.4 384h3 M44.4 385.8h3 M44.4 387.6h3" stroke="#2a8a53" stroke-width="0.9"/>
<rect x="35.2" y="381.7" width="7.7" height="7.4" fill="#1f7a45"/>
<path d="M37.3 383.5 L40.8 387.4 M40.8 383.5 L37.3 387.4" stroke="#fff" stroke-width="1.2"/>
</svg>
<div class="t" style="left:51.3px;transform-origin:0 0;top:378px;font-size:11.209px;line-height:15px;color:#262626;transform:scaleX(0.91);">Input_Output_Variables</div>
<svg class="b" style="left:0px;top:0px" width="320" height="663" viewBox="0 0 320 663"><path d="M14.9 404.1 V408.9 H10.1 Z" fill="#444"/></svg>
<div class="t" style="left:23.3px;transform-origin:0 0;top:399px;font-size:10.989px;line-height:14px;color:#262626;font-weight:bold;transform:scaleX(0.91);">Analyze:&nbsp; Develop Y=f(X) Relationship</div>
<svg class="b" style="left:0px;top:0px" width="320" height="663" viewBox="0 0 320 663">
<path d="M39.3 418.4 H46.1 L48.7 421 V431.2 H39.3 Z" fill="#fff" stroke="#7a7a7a" stroke-width="0.9"/>
<path d="M44.4 424h3 M44.4 425.8h3 M44.4 427.6h3" stroke="#2a8a53" stroke-width="0.9"/>
<rect x="35.2" y="421.7" width="7.7" height="7.4" fill="#1f7a45"/>
<path d="M37.3 423.5 L40.8 427.4 M40.8 423.5 L37.3 427.4" stroke="#fff" stroke-width="1.2"/>
</svg>
<div class="t" style="left:51.3px;transform-origin:0 0;top:418px;font-size:11.209px;line-height:15px;color:#262626;transform:scaleX(0.91);">Root Cause &amp; Corrective Action (8D) Burned batches</div>
<svg class="b" style="left:0px;top:0px" width="320" height="663" viewBox="0 0 320 663">
<path d="M39.3 438.4 H46.1 L48.7 441 V451.2 H39.3 Z" fill="#fff" stroke="#7a7a7a" stroke-width="0.9"/>
<path d="M44.4 444h3 M44.4 445.8h3 M44.4 447.6h3" stroke="#2a8a53" stroke-width="0.9"/>
<rect x="35.2" y="441.7" width="7.7" height="7.4" fill="#1f7a45"/>
<path d="M37.3 443.5 L40.8 447.4 M40.8 443.5 L37.3 447.4" stroke="#fff" stroke-width="1.2"/>
</svg>
<div class="t" style="left:51.3px;transform-origin:0 0;top:438px;font-size:11.209px;line-height:15px;color:#262626;transform:scaleX(0.91);">Root Cause &amp; Corrective Action (8D) Cured Lumps</div>
<svg class="b" style="left:0px;top:0px" width="320" height="663" viewBox="0 0 320 663">
<path d="M39.3 458.4 H46.1 L48.7 461 V471.2 H39.3 Z" fill="#fff" stroke="#7a7a7a" stroke-width="0.9"/>
<path d="M44.4 464h3 M44.4 465.8h3 M44.4 467.6h3" stroke="#2a8a53" stroke-width="0.9"/>
<rect x="35.2" y="461.7" width="7.7" height="7.4" fill="#1f7a45"/>
<path d="M37.3 463.5 L40.8 467.4 M40.8 463.5 L37.3 467.4" stroke="#fff" stroke-width="1.2"/>
</svg>
<div class="t" style="left:51.3px;transform-origin:0 0;top:458px;font-size:11.209px;line-height:15px;color:#262626;transform:scaleX(0.91);">Root Cause &amp; Corrective Action (8D) Rheometer issues</div>
<svg class="b" style="left:0px;top:0px" width="320" height="663" viewBox="0 0 320 663">
<path d="M39.3 478.4 H46.1 L48.7 481 V491.2 H39.3 Z" fill="#fff" stroke="#7a7a7a" stroke-width="0.9"/>
<path d="M44.4 484h3 M44.4 485.8h3 M44.4 487.6h3" stroke="#2a8a53" stroke-width="0.9"/>
<rect x="35.2" y="481.7" width="7.7" height="7.4" fill="#1f7a45"/>
<path d="M37.3 483.5 L40.8 487.4 M40.8 483.5 L37.3 487.4" stroke="#fff" stroke-width="1.2"/>
</svg>
<div class="t" style="left:51.3px;transform-origin:0 0;top:478px;font-size:11.209px;line-height:15px;color:#262626;transform:scaleX(0.91);">Root Cause &amp; Corrective Action (8D) Contamination</div>
<svg class="b" style="left:0px;top:0px" width="320" height="663" viewBox="0 0 320 663">
<path d="M35.5 496.7 H41.8 L45.3 500.2 V509.2 H35.5 Z" fill="#fff" stroke="#7a7a7a" stroke-width="0.9"/>
<path d="M41.8 496.7 V500.2 H45.3" fill="#f2f2f2" stroke="#7a7a7a" stroke-width="0.8"/>
<rect x="37.5" y="499.7" width="3" height="1.5" fill="none" stroke="#8a8a8a" stroke-width="0.8"/>
<path d="M37.3 503.4h2.2 M37.3 507.1h2.2" stroke="#999" stroke-width="0.8"/>
<rect x="41.2" y="502.9" width="2.5" height="1.4" fill="none" stroke="#8a8a8a" stroke-width="0.8"/>
<rect x="41.2" y="506.6" width="2.5" height="1.4" fill="none" stroke="#8a8a8a" stroke-width="0.8"/>
</svg>
<div class="t" style="left:51.8px;transform-origin:0 0;top:496px;font-size:11.209px;line-height:15px;color:#262626;transform:scaleX(0.91);">C&amp;E Matrix</div>
<svg class="b" style="left:0px;top:0px" width="320" height="663" viewBox="0 0 320 663">
<path d="M39 514.6 H45.8 L48.4 517.2 V527.2 H39 Z" fill="#fff" stroke="#7a7a7a" stroke-width="0.9"/>
<path d="M44.6 518.4 V521.2 H47.2" fill="none" stroke="#d24726" stroke-width="1.4"/>
<rect x="35" y="517.7" width="8.2" height="8.1" fill="#d24726"/>
<path d="M37.8 524.4 V519.4 H39.6 A1.5 1.5 0 0 1 39.6 522.4 H37.8" fill="none" stroke="#fff" stroke-width="1.2"/>
</svg>
<div class="t" style="left:52.3px;transform-origin:0 0;top:515px;font-size:11.209px;line-height:15px;color:#262626;transform:scaleX(0.91);">Analyze-Deliverables-Checklist</div>
<svg class="b" style="left:0px;top:0px" width="320" height="663" viewBox="0 0 320 663">
<path d="M35.5 534.7 H41.8 L45.3 538.2 V547.2 H35.5 Z" fill="#fff" stroke="#7a7a7a" stroke-width="0.9"/>
<path d="M41.8 534.7 V538.2 H45.3" fill="#f2f2f2" stroke="#7a7a7a" stroke-width="0.8"/>
<rect x="37.5" y="537.7" width="3" height="1.5" fill="none" stroke="#8a8a8a" stroke-width="0.8"/>
<path d="M37.3 541.4h2.2 M37.3 545.1h2.2" stroke="#999" stroke-width="0.8"/>
<rect x="41.2" y="540.9" width="2.5" height="1.4" fill="none" stroke="#8a8a8a" stroke-width="0.8"/>
<rect x="41.2" y="544.6" width="2.5" height="1.4" fill="none" stroke="#8a8a8a" stroke-width="0.8"/>
</svg>
<div class="t" style="left:49.8px;transform-origin:0 0;top:534px;font-size:11.209px;line-height:15px;color:#262626;transform:scaleX(0.91);">30-60-90 Action Plan</div>
<svg class="b" style="left:0px;top:0px" width="320" height="663" viewBox="0 0 320 663">
<path d="M35.5 552.7 H41.8 L45.3 556.2 V565.2 H35.5 Z" fill="#fff" stroke="#7a7a7a" stroke-width="0.9"/>
<path d="M41.8 552.7 V556.2 H45.3" fill="#f2f2f2" stroke="#7a7a7a" stroke-width="0.8"/>
<rect x="37.5" y="555.7" width="3" height="1.5" fill="none" stroke="#8a8a8a" stroke-width="0.8"/>
<path d="M37.3 559.4h2.2 M37.3 563.1h2.2" stroke="#999" stroke-width="0.8"/>
<rect x="41.2" y="558.9" width="2.5" height="1.4" fill="none" stroke="#8a8a8a" stroke-width="0.8"/>
<rect x="41.2" y="562.6" width="2.5" height="1.4" fill="none" stroke="#8a8a8a" stroke-width="0.8"/>
</svg>
<div class="t" style="left:49.8px;transform-origin:0 0;top:552px;font-size:11.209px;line-height:15px;color:#262626;transform:scaleX(0.91);">Pareto Chart Worksheet</div>
<svg class="b" style="left:0px;top:0px" width="320" height="663" viewBox="0 0 320 663">
<rect x="34" y="573.1" width="4.2" height="2.8" rx="0.6" fill="#2f6fba"/>
<rect x="34" y="578.0" width="4.2" height="2.7" rx="0.6" fill="#2f6fba"/>
<rect x="38.3" y="570.9" width="3.8" height="2" rx="0.5" fill="#f4b550"/>
<rect x="38.3" y="581.3" width="3.8" height="2.3" rx="0.5" fill="#f4b550"/>
<path d="M38 574.2 H40 L41.8 577 L40 579.6 H38" fill="none" stroke="#222" stroke-width="0.9"/>
<path d="M33.8 577.1 H42.2" stroke="#6a6a6a" stroke-width="1.2"/>
<rect x="43" y="575.9" width="4.8" height="2.4" rx="1.1" fill="#d9342a"/>
</svg>
<div class="t" style="left:51.099999999999994px;transform-origin:0 0;top:570px;font-size:11.209px;line-height:15px;color:#262626;transform:scaleX(0.91);">Fishbone</div>
<svg class="b" style="left:0px;top:0px" width="320" height="663" viewBox="0 0 320 663">
<path d="M35.5 588.7 H41.8 L45.3 592.2 V601.2 H35.5 Z" fill="#fff" stroke="#7a7a7a" stroke-width="0.9"/>
<path d="M41.8 588.7 V592.2 H45.3" fill="#f2f2f2" stroke="#7a7a7a" stroke-width="0.8"/>
<rect x="37.5" y="591.7" width="3" height="1.5" fill="none" stroke="#8a8a8a" stroke-width="0.8"/>
<path d="M37.3 595.4h2.2 M37.3 599.1h2.2" stroke="#999" stroke-width="0.8"/>
<rect x="41.2" y="594.9" width="2.5" height="1.4" fill="none" stroke="#8a8a8a" stroke-width="0.8"/>
<rect x="41.2" y="598.6" width="2.5" height="1.4" fill="none" stroke="#8a8a8a" stroke-width="0.8"/>
</svg>
<div class="t" style="left:49.8px;transform-origin:0 0;top:588px;font-size:11.209px;line-height:15px;color:#262626;transform:scaleX(0.91);">Five Whys</div>
<svg class="b" style="left:0px;top:0px" width="320" height="663" viewBox="0 0 320 663">
<path d="M35.5 607.7 H41.8 L45.3 611.2 V620.2 H35.5 Z" fill="#fff" stroke="#7a7a7a" stroke-width="0.9"/>
<path d="M41.8 607.7 V611.2 H45.3" fill="#f2f2f2" stroke="#7a7a7a" stroke-width="0.8"/>
<rect x="37.5" y="610.7" width="3" height="1.5" fill="none" stroke="#8a8a8a" stroke-width="0.8"/>
<path d="M37.3 614.4h2.2 M37.3 618.1h2.2" stroke="#999" stroke-width="0.8"/>
<rect x="41.2" y="613.9" width="2.5" height="1.4" fill="none" stroke="#8a8a8a" stroke-width="0.8"/>
<rect x="41.2" y="617.6" width="2.5" height="1.4" fill="none" stroke="#8a8a8a" stroke-width="0.8"/>
</svg>
<div class="t" style="left:49.8px;transform-origin:0 0;top:607px;font-size:11.209px;line-height:15px;color:#262626;transform:scaleX(0.91);">FMEA</div>
<svg class="b" style="left:0px;top:0px" width="320" height="663" viewBox="0 0 320 663">
<path d="M35.5 625.7 H41.8 L45.3 629.2 V638.2 H35.5 Z" fill="#fff" stroke="#7a7a7a" stroke-width="0.9"/>
<path d="M41.8 625.7 V629.2 H45.3" fill="#f2f2f2" stroke="#7a7a7a" stroke-width="0.8"/>
<rect x="37.5" y="628.7" width="3" height="1.5" fill="none" stroke="#8a8a8a" stroke-width="0.8"/>
<path d="M37.3 632.4h2.2 M37.3 636.1h2.2" stroke="#999" stroke-width="0.8"/>
<rect x="41.2" y="631.9" width="2.5" height="1.4" fill="none" stroke="#8a8a8a" stroke-width="0.8"/>
<rect x="41.2" y="635.6" width="2.5" height="1.4" fill="none" stroke="#8a8a8a" stroke-width="0.8"/>
</svg>
<div class="t" style="left:49.8px;transform-origin:0 0;top:625px;font-size:11.209px;line-height:15px;color:#262626;transform:scaleX(0.91);">Analyze Meeting Minutes</div>
<svg class="b" style="left:0px;top:0px" width="320" height="663" viewBox="0 0 320 663"><path d="M14.9 650.1 V654.9 H10.1 Z" fill="#444"/></svg>
<div class="t" style="left:23.3px;transform-origin:0 0;top:645px;font-size:11.429px;line-height:15px;color:#262626;font-weight:bold;transform:scaleX(0.91);">Improve:&nbsp; Implement Proposed Improvements</div>
</div></div>
<div class="b" style="left:303px;top:151px;width:13px;height:512px;background:#dfdfdf;"></div>
<div class="b" style="left:303px;top:151px;width:13px;height:13px;background:#fff;border:1px solid #c4c4c4;"></div>
<svg class="b" style="left:306.8px;top:156.2px" width="7" height="4" viewBox="0 0 7 4"><path d="M0 3.6 H6.7 L3.35 0 Z" fill="#6a6a6a"/></svg>
<div class="b" style="left:303px;top:381px;width:13px;height:290px;background:#fff;border:1px solid #c6c6c6;"></div>
<div class="b" style="left:317px;top:106px;width:963px;height:23px;background:#f1f1f1;border-bottom:1px solid #c8c8c8;"></div>
<div class="t" style="left:338.5px;transform-origin:0 0;top:109px;font-size:12.418px;line-height:16px;color:#333;transform:scaleX(0.91);">Project Today</div>
<div class="b" style="left:429px;top:106px;width:100px;height:23px;background:#fff;border-top:2px solid #333;border-left:1px solid #c8c8c8;border-right:1px solid #c8c8c8;"></div>
<div class="t" style="left:449.5px;transform-origin:0 0;top:109px;font-size:12.308px;line-height:16px;color:#222;font-weight:bold;transform:scaleX(0.91);">C&amp;E Matrix</div>
<svg class="b" style="left:516px;top:113.5px" width="7" height="7" viewBox="0 0 7 7"><path d="M0.6 0.6 L6.2 6.2 M6.2 0.6 L0.6 6.2" stroke="#6a6a6a" stroke-width="1"/></svg>
<div class="b" style="left:317px;top:129px;width:963px;height:534px;background:#fff;border-left:1px solid #c8c8c8;"></div>
<div class="t" style="left:335px;transform-origin:0 0;top:148px;font-size:22.396px;line-height:29px;color:#3b659a;transform:scaleX(0.96);">C&amp;E Matrix</div>
<div class="b" style="left:333.5px;top:180px;width:459px;height:2px;background:#6588b3;"></div>
<div class="t" style="left:333.8px;transform-origin:0 0;top:193px;font-size:9.677px;line-height:13px;color:#3c3c3c;font-weight:bold;transform:scaleX(0.93);">Project Name:</div>
<div class="b" style="left:334px;top:208px;width:455px;height:16px;border:1px solid #e0e0e0;background:#fff;"></div>
<div class="t" style="left:338px;transform-origin:0 0;top:210px;font-size:10.110px;line-height:13px;color:#222;transform:scaleX(0.91);">Reduce monthly scrap</div>
<div class="t" style="left:333.8px;transform-origin:0 0;top:239px;font-size:9.677px;line-height:13px;color:#3c3c3c;font-weight:bold;transform:scaleX(0.93);">Prepared By:</div>
<div class="b" style="left:334px;top:254px;width:297px;height:16px;border:1px solid #e0e0e0;background:#fff;"></div>
<div class="t" style="left:338px;transform-origin:0 0;top:256px;font-size:10.110px;line-height:13px;color:#222;transform:scaleX(0.91);">Ramakrishnan sukumar</div>
<div class="t" style="left:652.8px;transform-origin:0 0;top:239px;font-size:9.677px;line-height:13px;color:#3c3c3c;font-weight:bold;transform:scaleX(0.93);">Prepared Date:</div>
<div class="b" style="left:653px;top:254px;width:137px;height:16px;border:1px solid #e0e0e0;background:#fff;"></div>
<div class="t" style="left:656.5px;transform-origin:0 0;top:255px;font-size:10.824px;line-height:14px;color:#222;transform:scaleX(0.85);">5/28/2020</div>
<div class="t" style="left:334.5px;transform-origin:0 0;top:285px;font-size:11.868px;line-height:15px;color:#4a7fc1;transform:scaleX(0.91);">C&amp;E Matrix</div>
<div class="b" style="left:333px;top:438px;width:941px;height:69px;background:#f2f2f2;"></div>
<div class="b" style="left:332px;top:306px;width:766px;height:1px;background:#dcdcdc;"></div>
<div class="b" style="left:332px;top:329px;width:766px;height:1px;background:#dcdcdc;"></div>
<div class="b" style="left:332px;top:438px;width:943px;height:1px;background:#dcdcdc;"></div>
<div class="b" style="left:332px;top:306px;width:1px;height:357px;background:#dcdcdc;"></div>
<div class="b" style="left:915px;top:306px;width:1px;height:357px;background:#dcdcdc;"></div>
<div class="b" style="left:960px;top:306px;width:1px;height:357px;background:#dcdcdc;"></div>
<div class="b" style="left:1005px;top:306px;width:1px;height:357px;background:#dcdcdc;"></div>
<div class="b" style="left:1051px;top:306px;width:1px;height:357px;background:#dcdcdc;"></div>
<div class="b" style="left:1097px;top:306px;width:1px;height:357px;background:#dcdcdc;"></div>
<div class="b" style="left:481px;top:438px;width:1px;height:225px;background:#dcdcdc;"></div>
<div class="b" style="left:1136px;top:438px;width:1px;height:225px;background:#dcdcdc;"></div>
<div class="b" style="left:1181px;top:438px;width:1px;height:225px;background:#dcdcdc;"></div>
<div class="b" style="left:1274px;top:438px;width:1px;height:225px;background:#dcdcdc;"></div>
<div class="b" style="left:332px;top:507px;width:943px;height:1px;background:#dcdcdc;"></div>
<div class="b" style="left:332px;top:528px;width:943px;height:1px;background:#dcdcdc;"></div>
<div class="b" style="left:332px;top:550px;width:943px;height:1px;background:#dcdcdc;"></div>
<div class="b" style="left:332px;top:572px;width:943px;height:1px;background:#dcdcdc;"></div>
<div class="b" style="left:332px;top:594px;width:943px;height:1px;background:#dcdcdc;"></div>
<div class="b" style="left:332px;top:616px;width:943px;height:1px;background:#dcdcdc;"></div>
<div class="b" style="left:332px;top:638px;width:943px;height:1px;background:#dcdcdc;"></div>
<div class="b" style="left:332px;top:660px;width:943px;height:1px;background:#dcdcdc;"></div>
<div class="t" style="right:369.5px;text-align:right;transform-origin:100% 0;top:311px;font-size:10.330px;line-height:13px;color:#303030;transform:scaleX(0.91);">Importance of each output to the customer</div>
<div class="t" style="left:637.6px;width:600px;text-align:center;transform-origin:50% 0;top:310px;font-size:11.059px;line-height:14px;color:#303030;transform:scaleX(0.85);">9</div>
<div class="t" style="left:683px;width:600px;text-align:center;transform-origin:50% 0;top:310px;font-size:11.059px;line-height:14px;color:#303030;transform:scaleX(0.85);">8</div>
<div class="t" style="left:728.7px;width:600px;text-align:center;transform-origin:50% 0;top:310px;font-size:11.059px;line-height:14px;color:#303030;transform:scaleX(0.85);">7</div>
<div class="t" style="left:774px;width:600px;text-align:center;transform-origin:50% 0;top:310px;font-size:11.059px;line-height:14px;color:#303030;transform:scaleX(0.85);">10</div>
<div class="t" style="right:369.5px;text-align:right;transform-origin:100% 0;top:335px;font-size:10.330px;line-height:13px;color:#303030;transform:scaleX(0.91);">Outputs</div>
<div class="t" style="left:931.6px;top:431px;font-size:9.15px;line-height:12px;color:#303030;transform-origin:0 0;transform:rotate(-90deg);">Burned Batches</div>
<div class="t" style="left:977.0px;top:431px;font-size:9.15px;line-height:12px;color:#303030;transform-origin:0 0;transform:rotate(-90deg);">Cured Lumps</div>
<div class="t" style="left:1022.7px;top:431px;font-size:9.15px;line-height:12px;color:#303030;transform-origin:0 0;transform:rotate(-90deg);">Rheometer Issue</div>
<div class="t" style="left:1068.0px;top:431px;font-size:9.15px;line-height:12px;color:#303030;transform-origin:0 0;transform:rotate(-90deg);">Contaminated batches</div>
<div class="t" style="left:338px;transform-origin:0 0;top:442px;font-size:10.110px;line-height:13px;color:#303030;transform:scaleX(0.91);">Process Map - Activity</div>
<div class="t" style="left:486px;transform-origin:0 0;top:442px;font-size:10.110px;line-height:13px;color:#303030;transform:scaleX(0.91);">Inputs (X Variables)</div>
<div class="t" style="right:148.5px;text-align:right;transform-origin:100% 0;top:442px;font-size:10.110px;line-height:13px;color:#303030;transform:scaleX(0.91);">Weight</div>
<div class="t" style="right:148.5px;text-align:right;transform-origin:100% 0;top:454px;font-size:10.110px;line-height:13px;color:#303030;transform:scaleX(0.91);">ed</div>
<div class="t" style="right:148.5px;text-align:right;transform-origin:100% 0;top:467px;font-size:10.110px;line-height:13px;color:#303030;transform:scaleX(0.91);">Value</div>
<div class="t" style="right:148.5px;text-align:right;transform-origin:100% 0;top:479px;font-size:10.110px;line-height:13px;color:#303030;transform:scaleX(0.91);">by</div>
<div class="t" style="right:148.5px;text-align:right;transform-origin:100% 0;top:491px;font-size:10.110px;line-height:13px;color:#303030;transform:scaleX(0.91);">Input</div>
<div class="t" style="right:102px;text-align:right;transform-origin:100% 0;top:442px;font-size:10.110px;line-height:13px;color:#303030;transform:scaleX(0.91);">% of Net</div>
<div class="t" style="right:102px;text-align:right;transform-origin:100% 0;top:454px;font-size:10.110px;line-height:13px;color:#303030;transform:scaleX(0.91);">Effect by</div>
<div class="t" style="right:102px;text-align:right;transform-origin:100% 0;top:467px;font-size:10.110px;line-height:13px;color:#303030;transform:scaleX(0.91);">Input</div>
<div class="t" style="left:1186.5px;transform-origin:0 0;top:442px;font-size:10.110px;line-height:13px;color:#303030;transform:scaleX(0.91);">Status</div>
<div class="t" style="left:340px;transform-origin:0 0;top:512px;font-size:10.110px;line-height:13px;color:#303030;transform:scaleX(0.91);">Unmapped Variable</div>
<div class="b" style="left:466.3px;top:510.6px;width:11.9px;height:14.8px;background:#ececec;"></div>
<svg class="b" style="left:469.9px;top:517px" width="5.2" height="3" viewBox="0 0 5.2 3"><path d="M0 0 H5.2 L2.6 2.9 Z" fill="#111"/></svg>
<div class="b" style="left:482px;top:507px;width:432px;height:21px;overflow:hidden;"><div class="b" style="left:-482px;top:-507px;width:1280px;height:663px;">
<div class="t" style="left:487.6px;transform-origin:0 0;top:512px;font-size:10.110px;line-height:13px;color:#303030;transform:scaleX(0.91);">Mixer Slide door causing rubber build up which can cause cross contamination</div>
</div></div>
<div class="t" style="left:637.6px;width:600px;text-align:center;transform-origin:50% 0;top:511px;font-size:10.941px;line-height:14px;color:#303030;transform:scaleX(0.85);">7</div>
<div class="t" style="left:683px;width:600px;text-align:center;transform-origin:50% 0;top:511px;font-size:10.941px;line-height:14px;color:#303030;transform:scaleX(0.85);">9</div>
<div class="t" style="left:728.7px;width:600px;text-align:center;transform-origin:50% 0;top:511px;font-size:10.941px;line-height:14px;color:#303030;transform:scaleX(0.85);">0</div>
<div class="t" style="left:774px;width:600px;text-align:center;transform-origin:50% 0;top:511px;font-size:10.941px;line-height:14px;color:#303030;transform:scaleX(0.85);">9</div>
<div class="t" style="right:149.70000000000005px;text-align:right;transform-origin:100% 0;top:511px;font-size:11.071px;line-height:14px;color:#303030;transform:scaleX(0.84);">225</div>
<div class="t" style="right:103.5px;text-align:right;transform-origin:100% 0;top:511px;font-size:11.071px;line-height:14px;color:#303030;transform:scaleX(0.84);">9.5%</div>
<div class="t" style="left:1188px;transform-origin:0 0;top:512px;font-size:10.220px;line-height:13px;color:#303030;transform:scaleX(0.91);">Potential</div>
<div class="b" style="left:1259.1px;top:510.6px;width:11.9px;height:14.8px;background:#ececec;"></div>
<svg class="b" style="left:1262.7px;top:517px" width="5.2" height="3" viewBox="0 0 5.2 3"><path d="M0 0 H5.2 L2.6 2.9 Z" fill="#111"/></svg>
<div class="t" style="left:340px;transform-origin:0 0;top:534px;font-size:10.110px;line-height:13px;color:#303030;transform:scaleX(0.91);">Unmapped Variable</div>
<div class="b" style="left:466.3px;top:531.6px;width:11.9px;height:14.8px;background:#ececec;"></div>
<svg class="b" style="left:469.9px;top:538px" width="5.2" height="3" viewBox="0 0 5.2 3"><path d="M0 0 H5.2 L2.6 2.9 Z" fill="#111"/></svg>
<div class="b" style="left:482px;top:528px;width:432px;height:22px;overflow:hidden;"><div class="b" style="left:-482px;top:-528px;width:1280px;height:663px;">
<div class="t" style="left:487.6px;transform-origin:0 0;top:534px;font-size:10.110px;line-height:13px;color:#303030;transform:scaleX(0.91);">Inconsistent dump temperatures throughout run.</div>
</div></div>
<div class="t" style="left:637.6px;width:600px;text-align:center;transform-origin:50% 0;top:533px;font-size:10.941px;line-height:14px;color:#303030;transform:scaleX(0.85);">9</div>
<div class="t" style="left:683px;width:600px;text-align:center;transform-origin:50% 0;top:533px;font-size:10.941px;line-height:14px;color:#303030;transform:scaleX(0.85);">9</div>
<div class="t" style="left:728.7px;width:600px;text-align:center;transform-origin:50% 0;top:533px;font-size:10.941px;line-height:14px;color:#303030;transform:scaleX(0.85);">9</div>
<div class="t" style="left:774px;width:600px;text-align:center;transform-origin:50% 0;top:533px;font-size:10.941px;line-height:14px;color:#303030;transform:scaleX(0.85);">0</div>
<div class="t" style="right:149.70000000000005px;text-align:right;transform-origin:100% 0;top:533px;font-size:11.071px;line-height:14px;color:#303030;transform:scaleX(0.84);">216</div>
<div class="t" style="right:103.5px;text-align:right;transform-origin:100% 0;top:533px;font-size:11.071px;line-height:14px;color:#303030;transform:scaleX(0.84);">9.1%</div>
<div class="t" style="left:1188px;transform-origin:0 0;top:534px;font-size:10.220px;line-height:13px;color:#303030;transform:scaleX(0.91);">Potential</div>
<div class="b" style="left:1259.1px;top:531.6px;width:11.9px;height:14.8px;background:#ececec;"></div>
<svg class="b" style="left:1262.7px;top:538px" width="5.2" height="3" viewBox="0 0 5.2 3"><path d="M0 0 H5.2 L2.6 2.9 Z" fill="#111"/></svg>
<div class="t" style="left:340px;transform-origin:0 0;top:555px;font-size:10.110px;line-height:13px;color:#303030;transform:scaleX(0.91);">Unmapped Variable</div>
<div class="b" style="left:466.3px;top:553.6px;width:11.9px;height:14.8px;background:#ececec;"></div>
<svg class="b" style="left:469.9px;top:560px" width="5.2" height="3" viewBox="0 0 5.2 3"><path d="M0 0 H5.2 L2.6 2.9 Z" fill="#111"/></svg>
<div class="b" style="left:482px;top:550px;width:432px;height:22px;overflow:hidden;"><div class="b" style="left:-482px;top:-550px;width:1280px;height:663px;">
<div class="t" style="left:487.6px;transform-origin:0 0;top:555px;font-size:10.110px;line-height:13px;color:#303030;transform:scaleX(0.91);">Failure inspect workaway prior to use.</div>
</div></div>
<div class="t" style="left:637.6px;width:600px;text-align:center;transform-origin:50% 0;top:554px;font-size:10.941px;line-height:14px;color:#303030;transform:scaleX(0.85);">9</div>
<div class="t" style="left:683px;width:600px;text-align:center;transform-origin:50% 0;top:554px;font-size:10.941px;line-height:14px;color:#303030;transform:scaleX(0.85);">9</div>
<div class="t" style="left:728.7px;width:600px;text-align:center;transform-origin:50% 0;top:554px;font-size:10.941px;line-height:14px;color:#303030;transform:scaleX(0.85);">8</div>
<div class="t" style="left:774px;width:600px;text-align:center;transform-origin:50% 0;top:554px;font-size:10.941px;line-height:14px;color:#303030;transform:scaleX(0.85);">0</div>
<div class="t" style="right:149.70000000000005px;text-align:right;transform-origin:100% 0;top:554px;font-size:11.071px;line-height:14px;color:#303030;transform:scaleX(0.84);">209</div>
<div class="t" style="right:103.5px;text-align:right;transform-origin:100% 0;top:554px;font-size:11.071px;line-height:14px;color:#303030;transform:scaleX(0.84);">8.8%</div>
<div class="t" style="left:1188px;transform-origin:0 0;top:555px;font-size:10.220px;line-height:13px;color:#303030;transform:scaleX(0.91);">Potential</div>
<div class="b" style="left:1259.1px;top:553.6px;width:11.9px;height:14.8px;background:#ececec;"></div>
<svg class="b" style="left:1262.7px;top:560px" width="5.2" height="3" viewBox="0 0 5.2 3"><path d="M0 0 H5.2 L2.6 2.9 Z" fill="#111"/></svg>
<div class="t" style="left:340px;transform-origin:0 0;top:577px;font-size:10.110px;line-height:13px;color:#303030;transform:scaleX(0.91);">Unmapped Variable</div>
<div class="b" style="left:466.3px;top:575.6px;width:11.9px;height:14.8px;background:#ececec;"></div>
<svg class="b" style="left:469.9px;top:582px" width="5.2" height="3" viewBox="0 0 5.2 3"><path d="M0 0 H5.2 L2.6 2.9 Z" fill="#111"/></svg>
<div class="b" style="left:482px;top:572px;width:432px;height:22px;overflow:hidden;"><div class="b" style="left:-482px;top:-572px;width:1280px;height:663px;">
<div class="t" style="left:487.6px;transform-origin:0 0;top:577px;font-size:10.110px;line-height:13px;color:#303030;transform:scaleX(0.91);">Mixer heats up</div>
</div></div>
<div class="t" style="left:637.6px;width:600px;text-align:center;transform-origin:50% 0;top:576px;font-size:10.941px;line-height:14px;color:#303030;transform:scaleX(0.85);">9</div>
<div class="t" style="left:683px;width:600px;text-align:center;transform-origin:50% 0;top:576px;font-size:10.941px;line-height:14px;color:#303030;transform:scaleX(0.85);">7</div>
<div class="t" style="left:728.7px;width:600px;text-align:center;transform-origin:50% 0;top:576px;font-size:10.941px;line-height:14px;color:#303030;transform:scaleX(0.85);">9</div>
<div class="t" style="left:774px;width:600px;text-align:center;transform-origin:50% 0;top:576px;font-size:10.941px;line-height:14px;color:#303030;transform:scaleX(0.85);">0</div>
<div class="t" style="right:149.70000000000005px;text-align:right;transform-origin:100% 0;top:576px;font-size:11.071px;line-height:14px;color:#303030;transform:scaleX(0.84);">200</div>
<div class="t" style="right:103.5px;text-align:right;transform-origin:100% 0;top:576px;font-size:11.071px;line-height:14px;color:#303030;transform:scaleX(0.84);">8.4%</div>
<div class="t" style="left:1188px;transform-origin:0 0;top:577px;font-size:10.220px;line-height:13px;color:#303030;transform:scaleX(0.91);">Potential</div>
<div class="b" style="left:1259.1px;top:575.6px;width:11.9px;height:14.8px;background:#ececec;"></div>
<svg class="b" style="left:1262.7px;top:582px" width="5.2" height="3" viewBox="0 0 5.2 3"><path d="M0 0 H5.2 L2.6 2.9 Z" fill="#111"/></svg>
<div class="t" style="left:340px;transform-origin:0 0;top:599px;font-size:10.110px;line-height:13px;color:#303030;transform:scaleX(0.91);">Unmapped Variable</div>
<div class="b" style="left:466.3px;top:597.6px;width:11.9px;height:14.8px;background:#ececec;"></div>
<svg class="b" style="left:469.9px;top:604px" width="5.2" height="3" viewBox="0 0 5.2 3"><path d="M0 0 H5.2 L2.6 2.9 Z" fill="#111"/></svg>
<div class="b" style="left:482px;top:594px;width:432px;height:22px;overflow:hidden;"><div class="b" style="left:-482px;top:-594px;width:1280px;height:663px;">
<div class="t" style="left:487.6px;transform-origin:0 0;top:599px;font-size:10.110px;line-height:13px;color:#303030;transform:scaleX(0.91);">Operator lack of urgency</div>
</div></div>
<div class="t" style="left:637.6px;width:600px;text-align:center;transform-origin:50% 0;top:598px;font-size:10.941px;line-height:14px;color:#303030;transform:scaleX(0.85);">9</div>
<div class="t" style="left:683px;width:600px;text-align:center;transform-origin:50% 0;top:598px;font-size:10.941px;line-height:14px;color:#303030;transform:scaleX(0.85);">0</div>
<div class="t" style="left:728.7px;width:600px;text-align:center;transform-origin:50% 0;top:598px;font-size:10.941px;line-height:14px;color:#303030;transform:scaleX(0.85);">7</div>
<div class="t" style="left:774px;width:600px;text-align:center;transform-origin:50% 0;top:598px;font-size:10.941px;line-height:14px;color:#303030;transform:scaleX(0.85);">7</div>
<div class="t" style="right:149.70000000000005px;text-align:right;transform-origin:100% 0;top:598px;font-size:11.071px;line-height:14px;color:#303030;transform:scaleX(0.84);">200</div>
<div class="t" style="right:103.5px;text-align:right;transform-origin:100% 0;top:598px;font-size:11.071px;line-height:14px;color:#303030;transform:scaleX(0.84);">8.4%</div>
<div class="t" style="left:1188px;transform-origin:0 0;top:599px;font-size:10.220px;line-height:13px;color:#303030;transform:scaleX(0.91);">Potential</div>
<div class="b" style="left:1259.1px;top:597.6px;width:11.9px;height:14.8px;background:#ececec;"></div>
<svg class="b" style="left:1262.7px;top:604px" width="5.2" height="3" viewBox="0 0 5.2 3"><path d="M0 0 H5.2 L2.6 2.9 Z" fill="#111"/></svg>
<div class="t" style="left:340px;transform-origin:0 0;top:621px;font-size:10.110px;line-height:13px;color:#303030;transform:scaleX(0.91);">Unmapped Variable</div>
<div class="b" style="left:466.3px;top:619.6px;width:11.9px;height:14.8px;background:#ececec;"></div>
<svg class="b" style="left:469.9px;top:626px" width="5.2" height="3" viewBox="0 0 5.2 3"><path d="M0 0 H5.2 L2.6 2.9 Z" fill="#111"/></svg>
<div class="b" style="left:482px;top:616px;width:432px;height:22px;overflow:hidden;"><div class="b" style="left:-482px;top:-616px;width:1280px;height:663px;">
<div class="t" style="left:487.6px;transform-origin:0 0;top:621px;font-size:10.110px;line-height:13px;color:#303030;transform:scaleX(0.91);">Mixer&nbsp; frame has an opening on south side above door. crating an area for rubber to rest between batch</div>
</div></div>
<div class="t" style="left:637.6px;width:600px;text-align:center;transform-origin:50% 0;top:620px;font-size:10.941px;line-height:14px;color:#303030;transform:scaleX(0.85);">0</div>
<div class="t" style="left:683px;width:600px;text-align:center;transform-origin:50% 0;top:620px;font-size:10.941px;line-height:14px;color:#303030;transform:scaleX(0.85);">9</div>
<div class="t" style="left:728.7px;width:600px;text-align:center;transform-origin:50% 0;top:620px;font-size:10.941px;line-height:14px;color:#303030;transform:scaleX(0.85);">5</div>
<div class="t" style="left:774px;width:600px;text-align:center;transform-origin:50% 0;top:620px;font-size:10.941px;line-height:14px;color:#303030;transform:scaleX(0.85);">9</div>
<div class="t" style="right:149.70000000000005px;text-align:right;transform-origin:100% 0;top:620px;font-size:11.071px;line-height:14px;color:#303030;transform:scaleX(0.84);">197</div>
<div class="t" style="right:103.5px;text-align:right;transform-origin:100% 0;top:620px;font-size:11.071px;line-height:14px;color:#303030;transform:scaleX(0.84);">8.3%</div>
<div class="t" style="left:1188px;transform-origin:0 0;top:621px;font-size:10.220px;line-height:13px;color:#303030;transform:scaleX(0.91);">Potential</div>
<div class="b" style="left:1259.1px;top:619.6px;width:11.9px;height:14.8px;background:#ececec;"></div>
<svg class="b" style="left:1262.7px;top:626px" width="5.2" height="3" viewBox="0 0 5.2 3"><path d="M0 0 H5.2 L2.6 2.9 Z" fill="#111"/></svg>
<div class="t" style="left:340px;transform-origin:0 0;top:644px;font-size:10.110px;line-height:13px;color:#303030;transform:scaleX(0.91);">Unmapped Variable</div>
<div class="b" style="left:466.3px;top:641.6px;width:11.9px;height:14.8px;background:#ececec;"></div>
<svg class="b" style="left:469.9px;top:648px" width="5.2" height="3" viewBox="0 0 5.2 3"><path d="M0 0 H5.2 L2.6 2.9 Z" fill="#111"/></svg>
<div class="b" style="left:482px;top:638px;width:432px;height:22px;overflow:hidden;"><div class="b" style="left:-482px;top:-638px;width:1280px;height:663px;">
<div class="t" style="left:487.6px;transform-origin:0 0;top:644px;font-size:10.110px;line-height:13px;color:#303030;transform:scaleX(0.91);">Operator change the mix procedure.</div>
</div></div>
<div class="t" style="left:637.6px;width:600px;text-align:center;transform-origin:50% 0;top:643px;font-size:10.941px;line-height:14px;color:#303030;transform:scaleX(0.85);">7</div>
<div class="t" style="left:683px;width:600px;text-align:center;transform-origin:50% 0;top:643px;font-size:10.941px;line-height:14px;color:#303030;transform:scaleX(0.85);">7</div>
<div class="t" style="left:728.7px;width:600px;text-align:center;transform-origin:50% 0;top:643px;font-size:10.941px;line-height:14px;color:#303030;transform:scaleX(0.85);">9</div>
<div class="t" style="left:774px;width:600px;text-align:center;transform-origin:50% 0;top:643px;font-size:10.941px;line-height:14px;color:#303030;transform:scaleX(0.85);">0</div>
<div class="t" style="right:149.70000000000005px;text-align:right;transform-origin:100% 0;top:643px;font-size:11.071px;line-height:14px;color:#303030;transform:scaleX(0.84);">182</div>
<div class="t" style="right:103.5px;text-align:right;transform-origin:100% 0;top:643px;font-size:11.071px;line-height:14px;color:#303030;transform:scaleX(0.84);">7.7%</div>
<div class="t" style="left:1188px;transform-origin:0 0;top:644px;font-size:10.220px;line-height:13px;color:#303030;transform:scaleX(0.91);">Potential</div>
<div class="b" style="left:1259.1px;top:641.6px;width:11.9px;height:14.8px;background:#ececec;"></div>
<svg class="b" style="left:1262.7px;top:648px" width="5.2" height="3" viewBox="0 0 5.2 3"><path d="M0 0 H5.2 L2.6 2.9 Z" fill="#111"/></svg>
</body></html>
